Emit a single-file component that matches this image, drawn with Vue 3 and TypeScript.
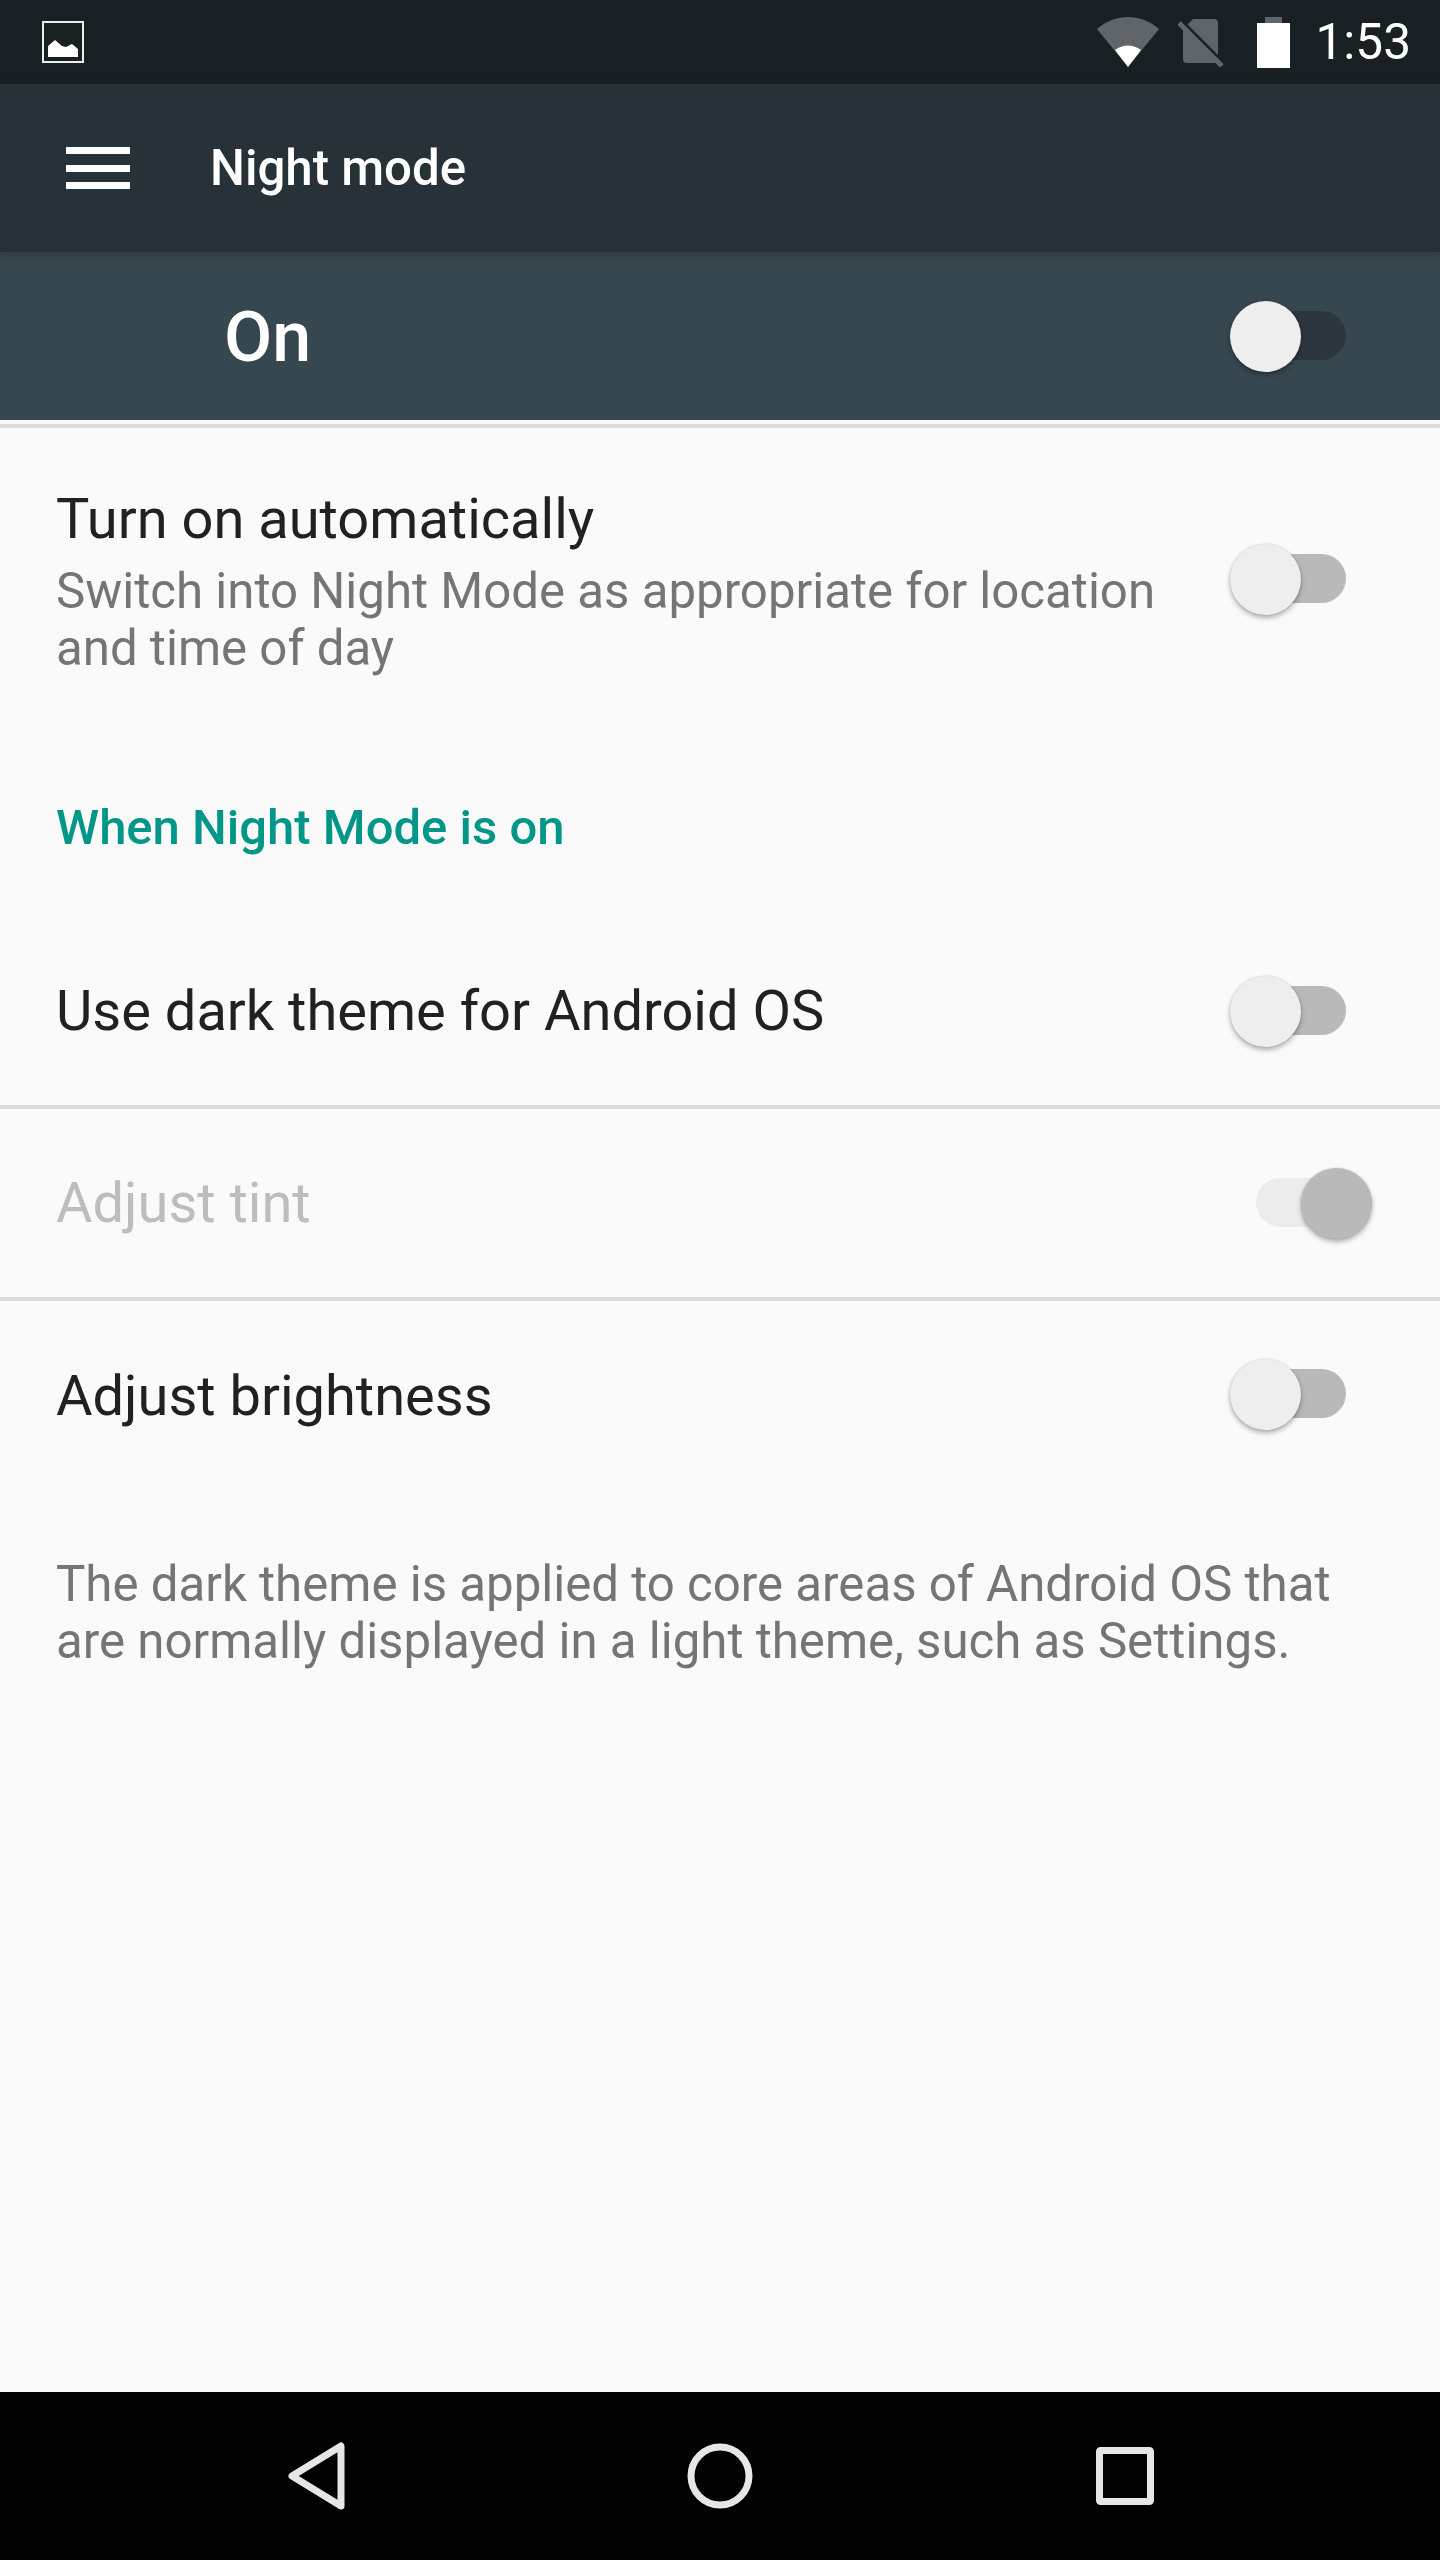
<script setup lang="ts">
interface SettingRow {
	label: string
	on: boolean
	disabled: boolean
}

const nightRows: SettingRow[] = [
	{ label: "Use dark theme for Android OS", on: false, disabled: false },
	{ label: "Adjust tint", on: true, disabled: true },
	{ label: "Adjust brightness", on: false, disabled: false },
]
</script>

<template>
	<div class="screen">
		<div class="status-bar">
			<svg class="status-image" width="42" height="42" viewBox="0 0 42 42">
				<rect x="1" y="1" width="40" height="40" fill="none" stroke="#eeeeee" stroke-width="2" />
				<path d="M6 36V25l7-6 7 6 4 1 6-3 6 5v8z" fill="#ffffff" />
			</svg>
			<div class="status-right">
				<svg width="62" height="50" viewBox="0 0 62 50">
					<path d="M0 12C18-4 44-4 62 12L31 50z" fill="#5f6568" />
					<path d="M18 33c8-6 18-6 26 0L31 50z" fill="#ffffff" />
				</svg>
				<svg class="status-sim" width="46" height="50" viewBox="0 0 46 50">
					<path d="M15 2H36q4 0 4 4V38L9.5 7.5zM5 12V42q0 4 4 4H41z" fill="#5f6568" />
					<path d="M1 6l43 43" stroke="#5f6568" stroke-width="5" />
				</svg>
				<svg class="status-battery" width="33" height="51" viewBox="0 0 33 51">
					<path d="M8 0h17v6h8v6H0V6h8z" fill="#5f6568" />
					<rect x="0" y="6" width="33" height="45" fill="#ffffff" />
				</svg>
				<span class="status-time">1:53</span>
			</div>
		</div>

		<div class="toolbar">
			<div class="menu-icon">
				<span></span>
				<span></span>
				<span></span>
			</div>
			<span class="toolbar-title">Night mode</span>
		</div>

		<div class="master-bar">
			<span class="master-label">On</span>
			<div class="switch switch-master">
				<div class="track"></div>
				<div class="thumb"></div>
			</div>
		</div>

		<div class="content">
			<div class="divider"></div>

			<div class="auto-row">
				<div class="auto-text">
					<div class="row-title">Turn on automatically</div>
					<div class="row-summary">Switch into Night Mode as appropriate for location and time of day</div>
				</div>
				<div class="switch">
					<div class="track"></div>
					<div class="thumb"></div>
				</div>
			</div>

			<div class="section-title">When Night Mode is on</div>

			<template v-for="(row, index) in nightRows" :key="row.label">
				<div class="setting-row" :class="{ 'setting-row-last': index === nightRows.length - 1 }">
					<span class="row-title" :class="{ 'row-title-disabled': row.disabled }">{{ row.label }}</span>
					<div class="switch" :class="{ 'switch-on': row.on }">
						<div class="track"></div>
						<div class="thumb"></div>
					</div>
				</div>
				<div v-if="index < nightRows.length - 1" class="divider"></div>
			</template>

			<p class="footnote">The dark theme is applied to core areas of Android OS that are normally displayed in a light theme, such as Settings.</p>
		</div>

		<div class="nav-bar">
			<svg class="nav-back" width="58" height="68" viewBox="0 0 58 68">
				<path d="M54 4V64L5 34z" fill="none" stroke="#e6e6e6" stroke-width="7" stroke-linejoin="round" />
			</svg>
			<svg class="nav-home" width="66" height="66" viewBox="0 0 66 66">
				<circle cx="33" cy="33" r="29" fill="none" stroke="#e6e6e6" stroke-width="7" />
			</svg>
			<svg width="58" height="58" viewBox="0 0 58 58">
				<rect x="3.5" y="3.5" width="51" height="51" rx="1" fill="none" stroke="#e6e6e6" stroke-width="7" />
			</svg>
		</div>
	</div>
</template>

<style scoped>
.screen {
	display: flex;
	flex-direction: column;
	height: 2560px;
	overflow: hidden;
	background: #fafafa;
	font-family: Roboto, "Liberation Sans", sans-serif;
}

.status-bar {
	display: flex;
	justify-content: space-between;
	align-items: center;
	flex: none;
	height: 84px;
	padding: 0 29px 0 42px;
	box-sizing: border-box;
	background: #182024;
}

.status-right {
	display: flex;
	align-items: center;
}

.status-sim {
	margin-left: 19px;
}

.status-battery {
	margin-left: 33px;
}

.status-time {
	margin-left: 26px;
	font-size: 49.5px;
	color: #ffffff;
}

.toolbar {
	display: flex;
	align-items: center;
	flex: none;
	height: 168px;
	padding-left: 66px;
	box-sizing: border-box;
	background: #263238;
	box-shadow: 0 3px 10px rgba(0, 0, 0, 0.22);
	position: relative;
	z-index: 1;
}

.menu-icon {
	display: flex;
	flex-direction: column;
	gap: 10.5px;
	width: 64px;
}

.menu-icon span {
	height: 7px;
	background: #ffffff;
}

.toolbar-title {
	margin-left: 80px;
	font-size: 49.2px;
	font-weight: 500;
	color: #ffffff;
}

.master-bar {
	display: flex;
	justify-content: space-between;
	align-items: center;
	flex: none;
	height: 168px;
	padding: 0 65px 0 224px;
	box-sizing: border-box;
	background: #37474f;
}

.master-label {
	padding-top: 2px;
	font-size: 70px;
	font-weight: 500;
	color: #ffffff;
}

.content {
	flex: 1;
	padding-top: 4px;
}

.divider {
	height: 4px;
	background: #dcdcdc;
}

.auto-row {
	display: flex;
	justify-content: space-between;
	align-items: flex-start;
	height: 248px;
	padding: 58px 65px 0 56px;
	box-sizing: border-box;
}

.auto-text {
	width: 1120px;
}

.auto-row .switch {
	margin-top: 58px;
}

.row-title {
	font-size: 56px;
	line-height: 66px;
	color: #212121;
}

.row-title-disabled {
	color: #bdbdbd;
}

.row-summary {
	margin-top: 11px;
	font-size: 49.2px;
	line-height: 57px;
	color: #757575;
}

.section-title {
	margin: 123px 0 61px;
	padding-left: 56px;
	font-size: 49px;
	line-height: 57px;
	font-weight: 500;
	color: #009688;
}

.setting-row {
	display: flex;
	justify-content: space-between;
	align-items: center;
	height: 188px;
	padding: 0 65px 0 56px;
	box-sizing: border-box;
}

.setting-row-last {
	height: 186px;
}

.setting-row-last .row-title {
	margin-top: 3px;
}

.footnote {
	margin: 0;
	padding: 69px 65px 0 56px;
	font-size: 49.2px;
	line-height: 57px;
	color: #757575;
}

.switch {
	position: relative;
	flex: none;
	width: 148px;
	height: 71px;
}

.track {
	position: absolute;
	top: 10px;
	left: 20px;
	width: 99px;
	height: 49px;
	border-radius: 25px;
	background: #b9b9b9;
}

.thumb {
	position: absolute;
	top: 0;
	left: 3px;
	width: 71px;
	height: 71px;
	border-radius: 50%;
	background: #eeeeee;
	box-shadow: 0 3px 5px rgba(0, 0, 0, 0.3), 0 0 2px rgba(0, 0, 0, 0.15);
}

.switch-master .track {
	background: #2b373d;
}

.switch-on .track {
	left: 29px;
	width: 90px;
	background: #ececec;
}

.switch-on .thumb {
	left: 74px;
	background: #b9b9b9;
}

.nav-bar {
	display: flex;
	justify-content: center;
	align-items: center;
	flex: none;
	height: 168px;
	background: #000000;
}

.nav-back {
	margin-right: 342px;
}

.nav-home {
	margin-right: 343px;
}
</style>
